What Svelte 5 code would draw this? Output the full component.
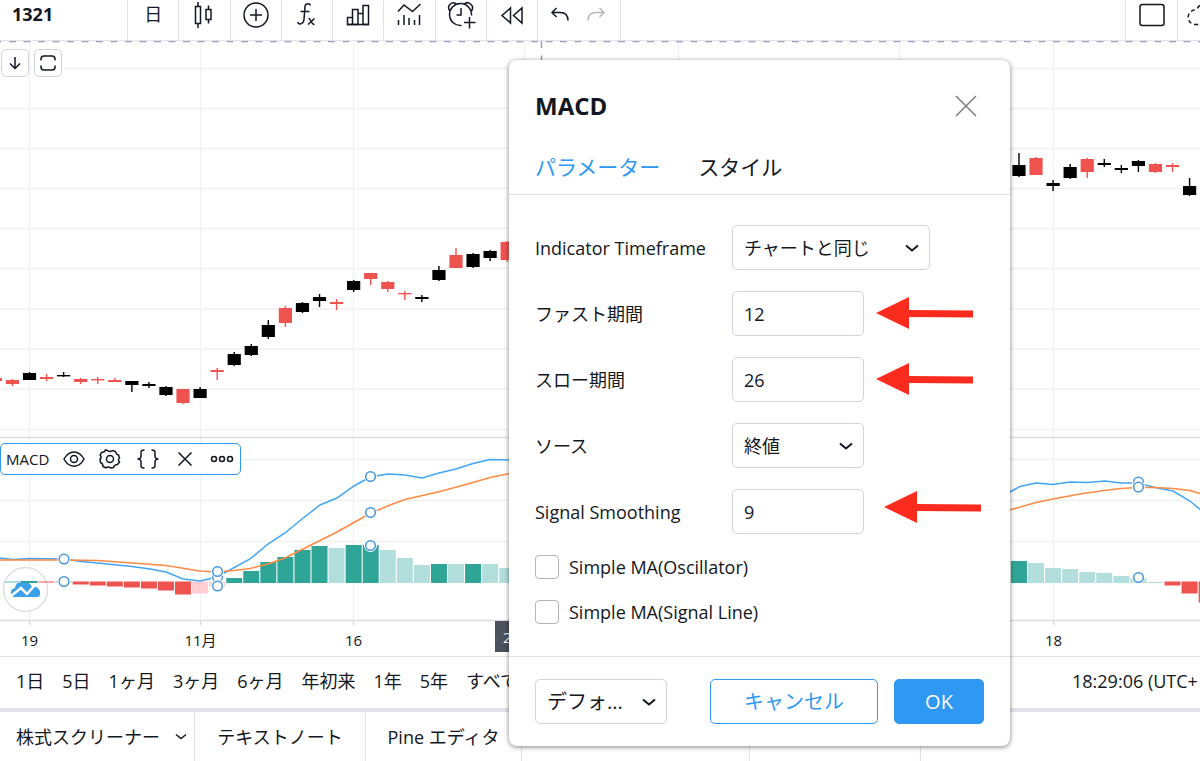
<script lang="ts">
    const STEP = 17.06;
    const BASELINE = 541;

    function barX(index: number) {
        return 29.5 + index * STEP;
    }

    // [index, high, bodyTop, bodyBottom, low, rising]
    const candles: [number, number, number, number, number, number][] = [
        [-2, 337, 337, 340, 340, 0],
        [-1, 338, 339, 343, 345, 0],
        [0, 331, 332, 339, 339, 1],
        [1, 333, 336, 338, 340, 0],
        [2, 331, 334, 335, 336, 1],
        [3, 337, 338, 341, 343, 0],
        [4, 336, 338, 339, 343, 0],
        [5, 337, 339, 341, 341, 0],
        [6, 340, 340, 344, 351, 1],
        [7, 341, 343, 345, 347, 1],
        [8, 345, 346, 354, 355, 1],
        [9, 348, 348, 362, 363, 0],
        [10, 346, 348, 357, 357, 1],
        [11, 327, 329, 331, 339, 0],
        [12, 311, 313, 324, 325, 1],
        [13, 303, 305, 314, 315, 1],
        [14, 279, 284, 296, 298, 1],
        [15, 265, 267, 282, 286, 0],
        [16, 261, 262, 271, 272, 1],
        [17, 253, 256, 260, 266, 1],
        [18, 258, 261, 263, 269, 0],
        [19, 239, 240, 249, 251, 1],
        [20, 232, 232, 238, 244, 0],
        [21, 240, 241, 248, 251, 0],
        [22, 250, 252, 253, 259, 0],
        [23, 254, 256, 258, 261, 1],
        [24, 225, 229, 239, 240, 1],
        [25, 207, 214, 227, 227, 0],
        [26, 212, 213, 226, 227, 1],
        [27, 209, 210, 217, 220, 1],
        [28, 200, 201, 219, 221, 0],
        [58, 112, 124, 135, 136, 1],
        [59, 116, 117, 134, 134, 0],
        [60, 139, 142, 145, 150, 1],
        [61, 123, 126, 137, 138, 1],
        [62, 117, 118, 131, 137, 0],
        [63, 118, 122, 124, 126, 1],
        [64, 124, 127, 129, 132, 1],
        [65, 119, 120, 125, 131, 1],
        [66, 122, 123, 131, 132, 0],
        [67, 122, 124, 126, 131, 0],
        [68, 137, 145, 154, 155, 1],
    ];

    // [index, height, tone], negative heights hang below the zero line
    const histogram: [number, number, string][] = [
        [-1, 2, "up-soft"],
        [0, 2, "up"],
        [1, -1, "down"],
        [2, 2, "up-soft"],
        [3, -3, "down"],
        [4, -4, "down"],
        [5, -5, "down"],
        [6, -6, "down"],
        [7, -7, "down"],
        [8, -9, "down"],
        [9, -13, "down"],
        [10, -12, "down-soft"],
        [11, -5, "down-soft"],
        [12, 5, "up"],
        [13, 12, "up"],
        [14, 21, "up"],
        [15, 26, "up"],
        [16, 33, "up"],
        [17, 37, "up"],
        [18, 35, "up-soft"],
        [19, 38, "up"],
        [20, 38, "up"],
        [21, 33, "up-soft"],
        [22, 25, "up-soft"],
        [23, 18, "up-soft"],
        [24, 19, "up"],
        [25, 19, "up-soft"],
        [26, 19, "up"],
        [27, 19, "up-soft"],
        [28, 15, "up-soft"],
        [58, 22, "up"],
        [59, 20, "up-soft"],
        [60, 15, "up-soft"],
        [61, 14, "up-soft"],
        [62, 11, "up-soft"],
        [63, 10, "up-soft"],
        [64, 7, "up-soft"],
        [65, 5, "up-soft"],
        [66, 1, "up-soft"],
        [67, -4, "down"],
        [68, -12, "down"],
        [69, -21, "down"],
    ];

    const macdLines = [
        "0,517 13,518.5 29,517.5 64,518 81,520.5 98,522 132,525.5 150,528 166,531 183,538 200,540 217,536 250,518 268,503 285,492 302,478 320,464 337,457 354,445 370,436 388,433 405,434 422,437 439,432 456,428 473,422.5 490,418.5 512,419",
        "1008,452 1020,445.5 1036,442 1053,443.5 1070,441 1088,441.5 1105,440 1121,442 1138,442 1155,446.5 1173,450 1190,460 1200,468.5",
    ];
    const signalLines = [
        "0,519 64,519 98,519.5 132,522 166,524.5 200,530 217,531 234,529.5 250,527.5 268,523 286,516.5 302,508.5 337,491 370,472.5 390,464 405,458.5 440,450.5 473,441.5 490,436.5 512,432",
        "1008,469.5 1036,461.5 1053,458 1080,453 1104,449.5 1121,447.5 1138,446.5 1155,446.5 1173,447.5 1190,449.5 1200,452.5",
    ];
    const handles = [
        [64, 518], [64, 540.5],
        [217.5, 536], [217.5, 530.5], [217.5, 545],
        [370.5, 435.5], [370.5, 471.5], [370.5, 504.5],
        [1138.5, 441], [1138.5, 446], [1138.5, 536.5],
    ];

    const gridX = [29.5, 200.5, 353.5, 524.5, 678.5, 899.5, 1053.5];
    const gridY = [27.5, 67.5, 107.5, 147.5, 187.5, 227.5, 268, 308, 348, 388.5, 418.5, 459.5, 500.5];
    const dates = [
        { x: 29.5, text: "19" },
        { x: 200.5, text: "11月" },
        { x: 353.5, text: "16" },
        { x: 1053.5, text: "18" },
    ];

    const ranges = ["1日", "5日", "1ヶ月", "3ヶ月", "6ヶ月", "年初来", "1年", "5年", "すべて"];
    const arrows = [
        { x: 367, y: 253 },
        { x: 367, y: 319 },
        { x: 375, y: 447 },
    ];

    let tab = $state("inputs");
    let timeframe = $state("チャートと同じ");
    let fast = $state("12");
    let slow = $state("26");
    let source = $state("終値");
    let smoothing = $state("9");
    let simpleOscillator = $state(false);
    let simpleSignal = $state(false);
</script>

{#snippet chevron()}
    <svg class="chevron" width="16" height="10" viewBox="0 0 16 10" aria-hidden="true">
        <path d="M2 2.5l6 5 6-5" />
    </svg>
{/snippet}

<div class="page">
    <header class="toolbar">
        <div class="symbol">1321</div>
        <div class="tools">
            <button aria-label="時間足"><span class="interval">日</span></button>
            <button aria-label="ローソク足">
                <svg width="28" height="30" viewBox="0 0 28 30">
                    <path d="M5.5 6.5h5v17h-5zM8 2v4.500M8 23.500V28M16 9.500h5v10h-5zM18.500 5.500v4M18.500 19.500v4" />
                </svg>
            </button>
            <button aria-label="比較">
                <svg width="28" height="30" viewBox="0 0 28 30">
                    <circle cx="14" cy="15" r="12" />
                    <path d="M14 9v12M8 15h12" />
                </svg>
            </button>
            <button aria-label="インジケーター">
                <svg width="28" height="30" viewBox="0 0 28 30">
                    <path d="M17.500 5.500c-.5-2-5-3-5.500 1l-1 13c-.4 5-5.500 5.500-6.500 2.500M7.500 11.500h9M15.500 18.500c2-1 2.500 6.500 6 6M15 24.500l6.500-6" />
                </svg>
            </button>
            <button aria-label="財務指標">
                <svg width="28" height="30" viewBox="0 0 28 30">
                    <path d="M3.500 24.500v-7h5v7zM8.500 24.500v-15h5.500v15zM14 24.500V13.500h5M19 24.500V5.500h5.500v19z" />
                    <path d="M3 24.500h22" />
                </svg>
            </button>
            <button aria-label="テンプレート">
                <svg width="28" height="30" viewBox="0 0 28 30">
                    <path d="M3 11.500l6-6.500 8.500 6.500L25.500 4M3.500 20v5M9 15v10M14 18v7M19.500 20v5M24.500 15v10" />
                </svg>
            </button>
            <button aria-label="アラート">
                <svg width="30" height="30" viewBox="0 0 30 30">
                    <path d="M15.500 25.500A11 11 0 1 1 25.500 15.500M4 11C0 6 6 0 11 4.500M18 4.500c4-4.500 11 1 7.500 6.500M15 8v7h-4.500M23.500 17v11.500M18 22.500h11.500" />
                </svg>
            </button>
            <button aria-label="リプレイ">
                <svg width="28" height="30" viewBox="0 0 28 30">
                    <path d="M12.500 8v15L4 15.500zM24 8v15l-8.500-7.500z" />
                </svg>
            </button>
        </div>
        <div class="history">
            <button aria-label="元に戻す">
                <svg width="20" height="20" viewBox="0 0 20 20"><path d="M6.500 3L2 7.500 6.500 12M2 7.500h8c5 0 8 3 8 8" /></svg>
            </button>
            <button aria-label="やり直し" disabled>
                <svg width="20" height="20" viewBox="0 0 20 20"><path d="M13.500 3L18 7.500 13.500 12M18 7.500h-8c-5 0-8 3-8 8" /></svg>
            </button>
        </div>
        <div class="layout-tools">
            <button aria-label="レイアウト">
                <svg width="28" height="30" viewBox="0 0 28 30"><rect x="2" y="4.500" width="24" height="21" rx="2.500" /></svg>
            </button>
            <button aria-label="読み込み">
                <svg width="34" height="30" viewBox="0 0 34 30">
                    <path stroke-dasharray="4 3" d="M20 4q-8 0-10 5-9 2-9 9 1 6 8 6.500h17" />
                </svg>
            </button>
        </div>
    </header>

    <main class="chart">
        <svg class="plot" viewBox="0 0 1200 615" aria-label="1321 チャート">
            <g class="grid">
                {#each gridX as x}
                    <line x1={x} x2={x} y1="0" y2="579" />
                    <line class="tick" x1={x} x2={x} y1="579" y2="584" />
                {/each}
                {#each gridY as y}
                    <line x1="0" x2="1200" y1={y} y2={y} />
                {/each}
            </g>
            <path class="pane-line" d="M0 396.500H1200M0 579.500H1200" />

            {#each candles as [index, high, top, bottom, low, rising]}
                <g class={rising ? "bull" : "bear"}>
                    <rect x={barX(index) - 0.7} y={high} width="1.4" height={low - high} />
                    <rect x={barX(index) - 6.6} y={top} width="13.2" height={Math.max(bottom - top, 1.4)} />
                </g>
            {/each}

            <g class="brand">
                <circle cx="25.500" cy="548.500" r="22" />
                <path d="M15 556c-5 0-6-8 0-9 1-6 7-9 12-6 3 1 4 3 5 5 5-1 9 3 8 7 0 2-1 3-3 3z" />
                <path class="brand-line" d="M11 555l10-8 6 6 8-9" />
            </g>

            {#each histogram as [index, height, tone]}
                <rect
                    class={tone}
                    x={barX(index) - 8}
                    y={height > 0 ? BASELINE + 1 - height : BASELINE - 0.5}
                    width="16"
                    height={Math.abs(height)}
                />
            {/each}

            {#each macdLines as points}
                <polyline class="macd" {points} />
            {/each}
            {#each signalLines as points}
                <polyline class="signal" {points} />
            {/each}
            {#each handles as [x, y]}
                <circle class="halo" cx={x} cy={y} r="6.500" />
                <circle class="handle" cx={x} cy={y} r="4.800" />
            {/each}

            <path class="crosshair" d="M-5.500 .5H1200" />
            <path class="crosshair" d="M541.500 0V579" />

            {#each dates as date}
                <text class="date" x={date.x} y="605">{date.text}</text>
            {/each}
            <rect class="cursor-date" x="495" y="580" width="94" height="31" />
            <text class="cursor-text" x="503" y="602">2021</text>
        </svg>

        <div class="pane-tools">
            <button aria-label="下へ移動">
                <svg width="16" height="16" viewBox="0 0 16 16"><path d="M8 2v11.500M3 8.500l5 5 5-5" /></svg>
            </button>
            <button aria-label="最大化">
                <svg width="18" height="18" viewBox="0 0 18 18">
                    <path d="M2 6.500V5q0-3 3-3h8q3 0 3 3v1.500M2 11.500V13q0 3 3 3h8q3 0 3-3v-1.500" />
                </svg>
            </button>
        </div>

        <div class="legend">
            <span>MACD</span>
            <button aria-label="非表示">
                <svg width="22" height="22" viewBox="0 0 22 22">
                    <path d="M1 11c5-9.500 15-9.500 20 0-5 9.500-15 9.500-20 0z" /><circle cx="11" cy="11" r="3.500" />
                </svg>
            </button>
            <button aria-label="設定">
                <svg width="22" height="22" viewBox="0 0 22 22">
                    <path d="M8.500 2.500q2.500 2 5 0l3 1q.5 3 3 3.500l1 3q-2 2 0 4l-2 2.500q-3 0-4 3l-3 .5q-2-2-4.500-.2l-3-1.300q0-3-2.500-4l-.5-3q2-2 .2-4.500l1.300-2.500q3 0 4-2.500z" />
                    <circle cx="11" cy="11" r="3.500" />
                </svg>
            </button>
            <button aria-label="ソースコード">
                <svg width="26" height="22" viewBox="0 0 26 22">
                    <path d="M9.500 2C6 2 6 3 6 5v3q0 3-3.500 3Q6 11 6 14v3c0 2 0 3 3.500 3M16.500 2C20 2 20 3 20 5v3q0 3 3.500 3-3.500 0-3.500 3v3c0 2 0 3-3.500 3" />
                </svg>
            </button>
            <button aria-label="削除">
                <svg width="22" height="22" viewBox="0 0 22 22"><path d="M4.500 4.500l13 13M17.500 4.500l-13 13" /></svg>
            </button>
            <button aria-label="その他">
                <svg width="24" height="22" viewBox="0 0 24 22">
                    <circle cx="4" cy="11" r="2.500" /><circle cx="12" cy="11" r="2.500" /><circle cx="20" cy="11" r="2.500" />
                </svg>
            </button>
        </div>
    </main>

    <nav class="ranges">
        {#each ranges as range}
            <button>{range}</button>
        {/each}
        <div class="clock">18:29:06 (UTC+</div>
    </nav>

    <footer class="panels">
        <button class="screener">
            株式スクリーナー
            <svg width="12" height="8" viewBox="0 0 12 8"><path d="M1 1.500l5 4 5-4" /></svg>
        </button>
        <button class="notes">テキストノート</button>
        <button class="pine">Pine エディタ</button>
        <div class="tester"></div>
        <div class="trading"></div>
    </footer>

    <div class="dialog" role="dialog" aria-labelledby="dialog-title">
        <div class="dialog-head">
            <h1 id="dialog-title">MACD</h1>
            <button class="close" aria-label="閉じる">
                <svg width="22" height="22" viewBox="0 0 22 22"><path d="M1 1l20 20M21 1L1 21" /></svg>
            </button>
        </div>
        <div class="tabs" role="tablist">
            <button role="tab" aria-selected={tab === "inputs"} class:active={tab === "inputs"} onclick={() => (tab = "inputs")}>パラメーター</button>
            <button role="tab" aria-selected={tab === "style"} class:active={tab === "style"} onclick={() => (tab = "style")}>スタイル</button>
        </div>

        <div class="fields">
            <label for="timeframe">Indicator Timeframe</label>
            <div class="select wide">
                <select id="timeframe" bind:value={timeframe}><option>チャートと同じ</option></select>
                {@render chevron()}
            </div>
            <label for="fast">ファスト期間</label>
            <input id="fast" type="text" bind:value={fast} />
            <label for="slow">スロー期間</label>
            <input id="slow" type="text" bind:value={slow} />
            <label for="source">ソース</label>
            <div class="select">
                <select id="source" bind:value={source}><option>終値</option></select>
                {@render chevron()}
            </div>
            <label for="smoothing">Signal Smoothing</label>
            <input id="smoothing" type="text" bind:value={smoothing} />
        </div>

        <div class="checks">
            <label><input type="checkbox" bind:checked={simpleOscillator} />Simple MA(Oscillator)</label>
            <label><input type="checkbox" bind:checked={simpleSignal} />Simple MA(Signal Line)</label>
        </div>

        <div class="actions">
            <div class="select defaults">
                <select aria-label="デフォルト"><option>デフォ...</option></select>
                {@render chevron()}
            </div>
            <button class="cancel">キャンセル</button>
            <button class="ok">OK</button>
        </div>

        <svg class="arrows" aria-hidden="true">
            {#each arrows as { x, y }}
                <path d="M{x} {y}l33-16v13l64 .5v7l-64-.5v12z" />
            {/each}
        </svg>
    </div>
</div>

<style>
    :global(body) {
        margin: 0;
        background: #fff;
    }

    .page {
        --ink: #131722;
        --blue: #2f98f3;
        --line: #e0e3eb;
        position: relative;
        min-height: 100vh;
        overflow: hidden;
        display: flex;
        flex-direction: column;
        color: var(--ink);
        font-family: "Open Sans", "Noto Sans CJK JP", sans-serif;
        font-size: 18px;
        line-height: 24px;
    }

    button,
    input,
    select {
        box-sizing: border-box;
        margin: 0;
        padding: 0;
        border: 0;
        background: none;
        color: inherit;
        font: inherit;
    }

    svg {
        display: block;
        fill: none;
        stroke: var(--ink);
        stroke-width: 1.5;
    }

    .toolbar {
        display: flex;
        height: 40px;
        border-bottom: 1px solid var(--line);
    }

    .toolbar button {
        display: flex;
        justify-content: center;
    }

    .symbol {
        box-sizing: border-box;
        width: 128px;
        padding: 2px 12px;
        border-right: 1px solid var(--line);
        font-weight: 700;
    }

    .tools {
        display: flex;
        width: 410px;
    }

    .tools button {
        flex: 1;
        border-right: 1px solid var(--line);
    }

    .interval {
        padding-top: 2px;
    }

    .history {
        box-sizing: border-box;
        display: flex;
        gap: 16px;
        width: 83px;
        padding: 5px 12px;
        border-right: 1px solid var(--line);
    }

    .history button:disabled {
        opacity: 0.3;
    }

    .layout-tools {
        display: flex;
        width: 75px;
        margin-left: auto;
        overflow: hidden;
    }

    .layout-tools button {
        flex: none;
        width: 52px;
        border-left: 1px solid var(--line);
    }

    .chart {
        position: relative;
    }

    .plot {
        width: 100%;
        height: auto;
        stroke: none;
    }

    .grid line {
        stroke: #f0f1f3;
        stroke-width: 1.3;
    }

    .grid .tick {
        stroke: #d5d7db;
    }

    .pane-line {
        stroke: #dcdde1;
    }

    .bull {
        fill: #000;
    }

    .bear {
        fill: #ef5350;
    }

    .up {
        fill: #2fa598;
    }

    .up-soft {
        fill: #b2dfdb;
    }

    .down {
        fill: #ef5350;
    }

    .down-soft {
        fill: #ffcdd2;
    }

    .macd {
        stroke: #42a5f5;
    }

    .signal {
        stroke: #ff8a45;
    }

    .halo {
        fill: #fff;
    }

    .handle {
        fill: #fff;
        stroke: #4697e0;
    }

    .brand circle {
        fill: #fff;
        fill-opacity: 0.7;
        stroke: #dedfe2;
    }

    .brand path {
        fill: #3b9fea;
    }

    .brand .brand-line {
        fill: none;
        stroke: #fff;
        stroke-width: 2.5;
    }

    .crosshair {
        stroke: #98a3b3;
        stroke-width: 1.5;
        stroke-dasharray: 7 7.5;
    }

    .date {
        fill: var(--ink);
        font-size: 15px;
        text-anchor: middle;
    }

    .cursor-date {
        fill: #4c525e;
    }

    .cursor-text {
        fill: #fff;
        font-size: 15px;
    }

    .pane-tools {
        position: absolute;
        top: 8px;
        left: 1px;
        display: flex;
        gap: 5px;
    }

    .pane-tools button {
        display: grid;
        place-items: center;
        width: 28px;
        height: 28px;
        border: 1px solid #d1d4dc;
        border-radius: 5px;
        background: #fff;
    }

    .legend {
        position: absolute;
        top: 402px;
        left: 0;
        box-sizing: border-box;
        display: flex;
        align-items: center;
        justify-content: space-between;
        width: 241px;
        height: 32px;
        padding: 0 6px 0 5px;
        border: 1px solid var(--blue);
        border-radius: 5px;
        background: #fff;
        font-size: 15px;
    }

    .ranges {
        display: flex;
        align-items: center;
        gap: 18px;
        height: 47px;
        padding: 0 0 4px 16px;
        border-top: 1px solid var(--line);
        border-bottom: 4px solid var(--line);
        white-space: nowrap;
    }

    .clock {
        width: 128px;
        margin-left: auto;
    }

    .panels {
        display: flex;
        flex: 1;
        min-height: 49px;
        white-space: nowrap;
    }

    .panels > * {
        box-sizing: border-box;
        border-right: 1px solid var(--line);
    }

    .screener {
        display: flex;
        align-items: center;
        justify-content: space-between;
        width: 195px;
        padding: 0 7px 0 16px;
    }

    .notes {
        width: 171px;
    }

    .pine {
        width: 156px;
    }

    .tester {
        width: 228px;
    }

    .trading {
        width: 171px;
    }

    .dialog {
        position: absolute;
        top: 60px;
        left: 509px;
        width: 501px;
        border-radius: 8px;
        background: #fff;
        box-shadow: 0 1px 5px rgba(0, 0, 0, 0.5);
    }

    .dialog-head {
        display: flex;
        align-items: center;
        justify-content: space-between;
        height: 60px;
        padding: 16px 33px 0 26px;
    }

    h1 {
        margin: 0;
        font-size: 24px;
        font-weight: 700;
        line-height: 32px;
    }

    .close svg {
        stroke: #787b86;
    }

    .tabs {
        display: flex;
        align-items: center;
        gap: 38px;
        height: 54px;
        padding: 4px 26px 0;
        border-bottom: 1px solid var(--line);
        font-size: 21px;
    }

    .tabs .active {
        color: var(--blue);
    }

    .fields {
        display: grid;
        grid-template-columns: 197px 1fr;
        grid-auto-rows: 45px;
        row-gap: 21px;
        align-items: center;
        padding: 30px 26px 0;
    }

    .fields > input {
        width: 132px;
        height: 45px;
        padding: 0 11px;
        border: 1px solid #d1d4dc;
        border-radius: 5px;
    }

    .select {
        display: grid;
        align-items: center;
        width: 132px;
        height: 45px;
    }

    .select.wide {
        width: 198px;
    }

    .select > * {
        grid-area: 1 / 1;
    }

    select {
        appearance: none;
        width: 100%;
        height: 100%;
        padding: 0 11px;
        border: 1px solid #d1d4dc;
        border-radius: 5px;
    }

    .chevron {
        justify-self: end;
        margin-right: 10px;
        pointer-events: none;
        stroke-width: 2;
    }

    .checks {
        display: flex;
        flex-direction: column;
        gap: 21px;
        padding: 21px 26px 32px;
    }

    .checks label {
        display: flex;
        align-items: center;
        gap: 10px;
    }

    .checks input {
        appearance: none;
        width: 24px;
        height: 24px;
        border: 1px solid #b2b5be;
        border-radius: 4px;
        background: #fff;
    }

    .checks input:checked {
        background: var(--blue);
    }

    .actions {
        display: flex;
        align-items: center;
        gap: 16px;
        padding: 22px 26px;
        border-top: 1px solid var(--line);
        font-size: 20px;
    }

    .defaults {
        margin-right: auto;
    }

    .cancel,
    .ok {
        height: 45px;
        border: 1px solid var(--blue);
        border-radius: 5px;
    }

    .cancel {
        width: 168px;
        color: var(--blue);
    }

    .ok {
        width: 90px;
        background: var(--blue);
        color: #fff;
    }

    .arrows {
        position: absolute;
        inset: 0;
        width: 100%;
        height: 100%;
        fill: #fb2c1d;
        stroke: none;
        pointer-events: none;
    }
</style>
